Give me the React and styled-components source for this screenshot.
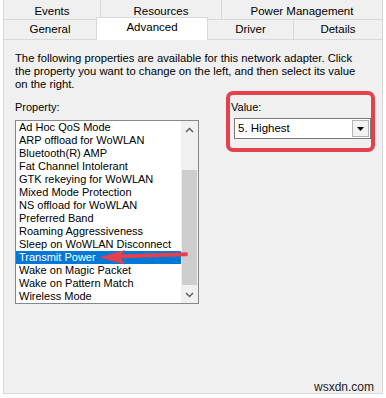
import React from 'react';
import styled, { createGlobalStyle } from 'styled-components';

const Global = createGlobalStyle`
  html, body { margin: 0; padding: 0; background: #ffffff; }
  body { font-family: "Liberation Sans", Arial, sans-serif; }
`;

const Window = styled.div`
  position: relative;
  width: 386px;
  height: 398px;
  overflow: hidden;
  background: #ffffff;
  font-family: "Liberation Sans", Arial, sans-serif;
  font-size: 11px;
  line-height: 13px;
  color: #000;
`;

const Tabs = styled.div`
  margin-left: 3px;
  width: 380px;
  display: flex;
  flex-direction: column;
`;

const TabRow = styled.div`
  display: flex;
  align-items: flex-end;
  height: ${p => p.$h}px;
  margin-top: ${p => p.$mt || 0}px;
`;

const Tab = styled.div`
  box-sizing: border-box;
  width: ${p => p.$w}px;
  height: ${p => (p.$active ? 23 : 20)}px;
  margin-left: ${p => (p.$first ? 0 : -1)}px;
  margin-bottom: ${p => (p.$active ? -1 : 0)}px;
  position: relative;
  z-index: ${p => (p.$active ? 2 : 1)};
  border: 1px solid #d9d9d9;
  border-bottom: none;
  background: ${p => (p.$active ? '#ffffff' : '#f0f0f0')};
  display: flex;
  justify-content: center;
  align-items: ${p => (p.$active ? 'flex-start' : 'center')};
  padding-top: ${p => (p.$active ? 3 : p.$pt || 0)}px;
  font-size: 11.5px;
  white-space: nowrap;
`;

const Panel = styled.div`
  box-sizing: border-box;
  margin-left: 3px;
  width: 380px;
  height: 355px;
  border: 1px solid #d9d9d9;
  background: #f0f0f0;
  padding: 12px 11px 0 11px;
  display: flex;
  flex-direction: column;
`;

const Intro = styled.p`
  margin: 0;
  font-size: 11.25px;
  white-space: nowrap;
`;

const Columns = styled.div`
  display: flex;
  align-items: flex-start;
`;

const LeftCol = styled.div`
  display: flex;
  flex-direction: column;
  width: 184px;
`;

const Label = styled.div`
  margin-top: ${p => p.$mt || 0}px;
  padding-left: ${p => p.$pl || 0}px;
`;

const ListBox = styled.div`
  box-sizing: border-box;
  margin-top: 6px;
  width: 184px;
  height: 184px;
  border: 1px solid #828790;
  background: #ffffff;
  display: flex;
`;

const Items = styled.div`
  flex: 1;
  overflow: hidden;
  display: flex;
  flex-direction: column;
`;

const Item = styled.div`
  height: 13px;
  flex: none;
  padding-left: 3px;
  white-space: nowrap;
  background: ${p => (p.$sel ? '#0078d7' : 'transparent')};
  color: ${p => (p.$sel ? '#ffffff' : '#000000')};
`;

const Scrollbar = styled.div`
  width: 17px;
  background: #f0f0f0;
  display: flex;
  flex-direction: column;
`;

const ScrollBtn = styled.div`
  height: 17px;
  flex: none;
  display: flex;
  align-items: center;
  justify-content: center;
`;

const Track = styled.div`
  flex: 1;
  display: flex;
  flex-direction: column;
  align-items: center;
`;

const Thumb = styled.div`
  width: 15px;
  background: #cdcdcd;
`;

const ValueBox = styled.div`
  box-sizing: border-box;
  margin-left: 27px;
  width: 156px;
  height: 61px;
  border: 4px solid #e2414d;
  border-radius: 7px;
  padding: 6px 0 0 0;
  display: flex;
  flex-direction: column;
`;

const Select = styled.div`
  box-sizing: border-box;
  margin: 4px 0 0 4px;
  width: 137px;
  height: 21px;
  border: 1px solid #7a7a7a;
  background: #ffffff;
  display: flex;
  align-items: center;
  padding: 0 1px 0 3px;
`;

const SelectText = styled.span`
  flex: 1;
  font-size: 11.5px;
`;

const DropBtn = styled.div`
  box-sizing: border-box;
  width: 17px;
  height: 17px;
  border: 1px solid #b4b4b4;
  background: #f2f2f2;
  display: flex;
  align-items: center;
  justify-content: center;
`;

const Overlay = styled.svg`
  position: absolute;
  left: 0;
  top: 0;
  pointer-events: none;
`;

const Watermark = styled.div`
  position: absolute;
  right: 12px;
  top: 380px;
  font-size: 12px;
  line-height: 14px;
  color: #222;
`;

const items = [
  'Ad Hoc QoS Mode',
  'ARP offload for WoWLAN',
  'Bluetooth(R) AMP',
  'Fat Channel Intolerant',
  'GTK rekeying for WoWLAN',
  'Mixed Mode Protection',
  'NS offload for WoWLAN',
  'Preferred Band',
  'Roaming Aggressiveness',
  'Sleep on WoWLAN Disconnect',
  'Transmit Power',
  'Wake on Magic Packet',
  'Wake on Pattern Match',
  'Wireless Mode',
];

const Chevron = ({ up }) => (
  <svg width="9" height="6" viewBox="0 0 9 6">
    <path
      d={up ? 'M1 5 L4.5 1.5 L8 5' : 'M1 1 L4.5 4.5 L8 1'}
      fill="none"
      stroke="#606060"
      strokeWidth="1.5"
    />
  </svg>
);

export default function App() {
  return (
    <Window>
      <Global />
      <Tabs>
        <TabRow $h={20} $mt={-1}>
          <Tab $first $w={98} $pt={3}>Events</Tab>
          <Tab $w={122} $pt={3}>Resources</Tab>
          <Tab $w={162} $pt={3}>Power Management</Tab>
        </TabRow>
        <TabRow $h={20}>
          <Tab $first $w={94}>General</Tab>
          <Tab $w={112} $active>Advanced</Tab>
          <Tab $w={87}>Driver</Tab>
          <Tab $w={90}>Details</Tab>
        </TabRow>
      </Tabs>
      <Panel>
        <Intro>
          The following properties are available for this network adapter. Click
          <br />
          the property you want to change on the left, and then select its value
          <br />
          on the right.
        </Intro>
        <Columns>
          <LeftCol>
            <Label $mt={10}>Property:</Label>
            <ListBox>
              <Items>
                {items.map(t => (
                  <Item key={t} $sel={t === 'Transmit Power'}>{t}</Item>
                ))}
              </Items>
              <Scrollbar>
                <ScrollBtn><Chevron up /></ScrollBtn>
                <Track>
                  <Thumb style={{ marginTop: 32, height: 115 }} />
                </Track>
                <ScrollBtn><Chevron /></ScrollBtn>
              </Scrollbar>
            </ListBox>
          </LeftCol>
          <ValueBox>
            <Label $pl={1}>Value:</Label>
            <Select>
              <SelectText>5. Highest</SelectText>
              <DropBtn>
                <svg width="7" height="4" viewBox="0 0 7 4">
                  <path d="M0 0 L7 0 L3.5 4 Z" fill="#000" />
                </svg>
              </DropBtn>
            </Select>
          </ValueBox>
        </Columns>
      </Panel>
      <Overlay width="386" height="398">
        <path d="M118 256.5 L186 254.2" stroke="#e2414d" strokeWidth="4" strokeLinecap="round" />
        <path d="M99 257.3 L125 250 L120 257 L125 264.5 Z" fill="#e2414d" />
      </Overlay>
      <Watermark>wsxdn.com</Watermark>
    </Window>
  );
}
